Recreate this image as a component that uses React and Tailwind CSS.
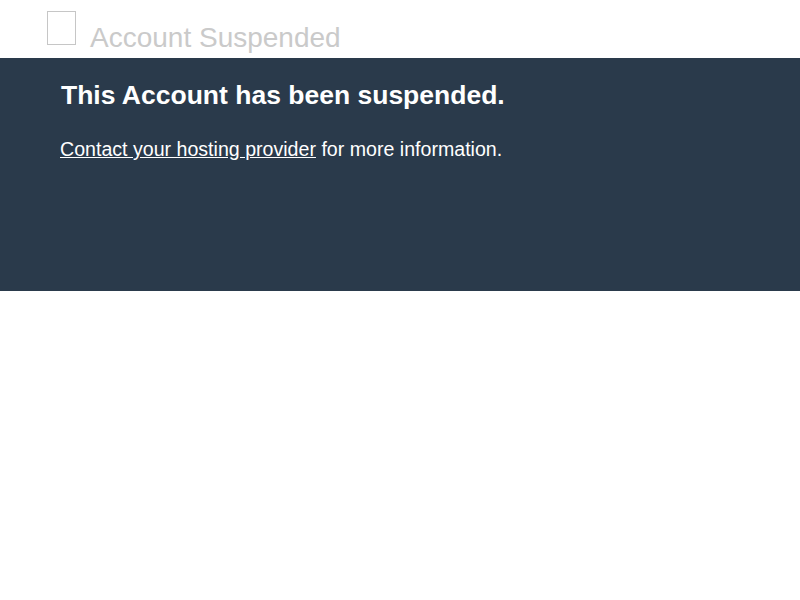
// Account suspended page
export default function App() {
  return (
    <div className="min-h-[600px] bg-white font-['Liberation_Sans',Arial,sans-serif]">
      {/* 헤더 */}
      <div className="h-[58px] flex items-start pl-[47px] pt-[11px]">
        <div className="w-[29px] h-[34px] border border-[#c6c6c6]" />
        <h1 className="ml-[14px] mt-[11px] text-[28px] leading-[32px] text-[#cacaca]">Account Suspended</h1>
      </div>

      {/* 본문 */}
      <div className="h-[233px] bg-[#2a3a4b] pl-[60px] pt-[21px] text-white">
        <h2 className="text-[26.5px] leading-[32px] font-bold pl-[1px]">This Account has been suspended.</h2>
        <p className="mt-[26px] text-[19.6px] leading-[24px]">
          <a href="#" className="underline">Contact your hosting provider</a> for more information.
        </p>
      </div>
    </div>
  );
}
